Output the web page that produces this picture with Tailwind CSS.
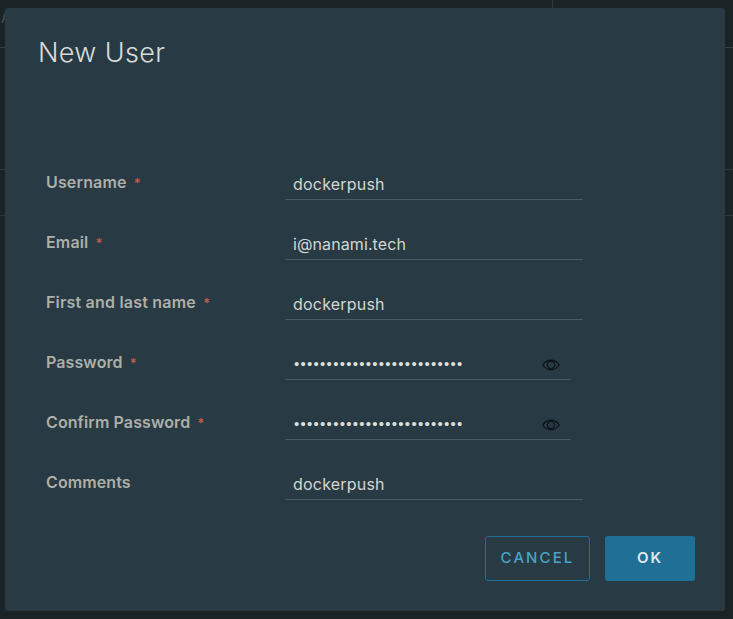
<!doctype html>
<html>
<head>
<meta charset="utf-8">
<script src="https://cdn.jsdelivr.net/npm/@tailwindcss/browser@4"></script>
</head>
<body class="m-0 h-[619px] w-[733px] overflow-hidden bg-[#1b2327] font-['Inter',sans-serif]">
<div class="relative h-[619px] w-[733px] overflow-hidden">
  <span class="absolute left-[1px] top-[11px] text-[14px] leading-[14px] text-[#4a4f50]">A</span>
  <div class="absolute left-0 top-[47px] h-px w-full bg-[#3a3f3f]"></div>
  <div class="absolute left-0 top-[169px] h-px w-full bg-[#2f383c]"></div>
  <div class="absolute left-0 top-[215px] h-px w-full bg-[#2f383c]"></div>
  <div class="absolute left-[552px] top-0 h-2 w-px bg-[#2f383c]"></div>
  <div class="absolute left-[5px] top-2 flex h-[603px] w-[720px] flex-col rounded-[3px] bg-[#283a44] pl-[33px] pr-[30px]">
    <h1 class="mt-[27px] h-[36px] text-[27px] leading-[36px] font-light tracking-[0.35px] text-[#d8dbd9]">New User</h1>
    <form class="mt-[97px] flex flex-col">
      <div class="flex h-[60px] items-start">
        <label class="w-[247px] pl-[8px] pt-[2px] text-[16px] leading-[24px] font-semibold tracking-[0.15px] text-[#adafa8]">Username <span class="ml-[3px] text-[13px] text-[#c25a4f]">*</span></label>
        <div class="h-[32px] w-[298px] border-b border-[#485a63] pl-[8px] pt-[4px] text-[16px] leading-[24px] tracking-[0.2px] text-[#d4d6d2]">dockerpush</div>
      </div>
      <div class="flex h-[60px] items-start">
        <label class="w-[247px] pl-[8px] pt-[2px] text-[16px] leading-[24px] font-semibold tracking-[0.15px] text-[#adafa8]">Email <span class="ml-[3px] text-[13px] text-[#c25a4f]">*</span></label>
        <div class="h-[32px] w-[298px] border-b border-[#485a63] pl-[8px] pt-[4px] text-[16px] leading-[24px] tracking-[0.1px] text-[#d4d6d2]">i@nanami.tech</div>
      </div>
      <div class="flex h-[60px] items-start">
        <label class="w-[247px] pl-[8px] pt-[2px] text-[16px] leading-[24px] font-semibold tracking-[0.2px] text-[#adafa8]">First and last name <span class="ml-[3px] text-[13px] text-[#c25a4f]">*</span></label>
        <div class="h-[32px] w-[298px] border-b border-[#485a63] pl-[8px] pt-[4px] text-[16px] leading-[24px] tracking-[0.2px] text-[#d4d6d2]">dockerpush</div>
      </div>
      <div class="flex h-[60px] items-start">
        <label class="w-[247px] pl-[8px] pt-[2px] text-[16px] leading-[24px] font-semibold tracking-[0.1px] text-[#adafa8]">Password <span class="ml-[3px] text-[13px] text-[#c25a4f]">*</span></label>
        <div class="relative h-[32px] w-[286px] border-b border-[#485a63] pl-[9px] pt-[3px] text-[16px] leading-[24px] text-[#dcdeda]">
          <span class="font-['Liberation_Sans'] text-[15px] tracking-[1.27px]">••••••••••••••••••••••••••</span>
          <svg class="absolute left-[257px] top-[9px] h-[16px] w-[18px]" viewBox="0 0 18 16" fill="none" stroke="#0c1417" stroke-width="1.3"><path d="M0.8 8C3 4.8 5.8 3.2 9 3.2S15 4.8 17.2 8C15 11.2 12.2 12.8 9 12.8S3 11.2 0.8 8Z"/><circle cx="9" cy="8" r="3.6"/></svg>
        </div>
      </div>
      <div class="flex h-[60px] items-start">
        <label class="w-[247px] pl-[8px] pt-[2px] text-[16px] leading-[24px] font-semibold tracking-[0.1px] text-[#adafa8]">Confirm Password <span class="ml-[3px] text-[13px] text-[#c25a4f]">*</span></label>
        <div class="relative h-[32px] w-[286px] border-b border-[#485a63] pl-[9px] pt-[3px] text-[16px] leading-[24px] text-[#dcdeda]">
          <span class="font-['Liberation_Sans'] text-[15px] tracking-[1.27px]">••••••••••••••••••••••••••</span>
          <svg class="absolute left-[257px] top-[9px] h-[16px] w-[18px]" viewBox="0 0 18 16" fill="none" stroke="#0c1417" stroke-width="1.3"><path d="M0.8 8C3 4.8 5.8 3.2 9 3.2S15 4.8 17.2 8C15 11.2 12.2 12.8 9 12.8S3 11.2 0.8 8Z"/><circle cx="9" cy="8" r="3.6"/></svg>
        </div>
      </div>
      <div class="flex h-[60px] items-start">
        <label class="w-[247px] pl-[8px] pt-[2px] text-[16px] leading-[24px] font-semibold tracking-[0.1px] text-[#adafa8]">Comments</label>
        <div class="h-[32px] w-[298px] border-b border-[#485a63] pl-[8px] pt-[4px] text-[16px] leading-[24px] tracking-[0.2px] text-[#d4d6d2]">dockerpush</div>
      </div>
    </form>
    <div class="absolute right-[30px] top-[528px] flex gap-[15px]">
      <button class="h-[45px] w-[105px] rounded-[3px] border border-[#1f6f96] text-[15px] font-medium tracking-[2.1px] text-[#4aa3c9]">CANCEL</button>
      <button class="h-[45px] w-[90px] rounded-[3px] bg-[#1f6f96] text-[15px] font-semibold tracking-[2px] text-[#e3e7e8]">OK</button>
    </div>
  </div>
</div>
</body>
</html>
